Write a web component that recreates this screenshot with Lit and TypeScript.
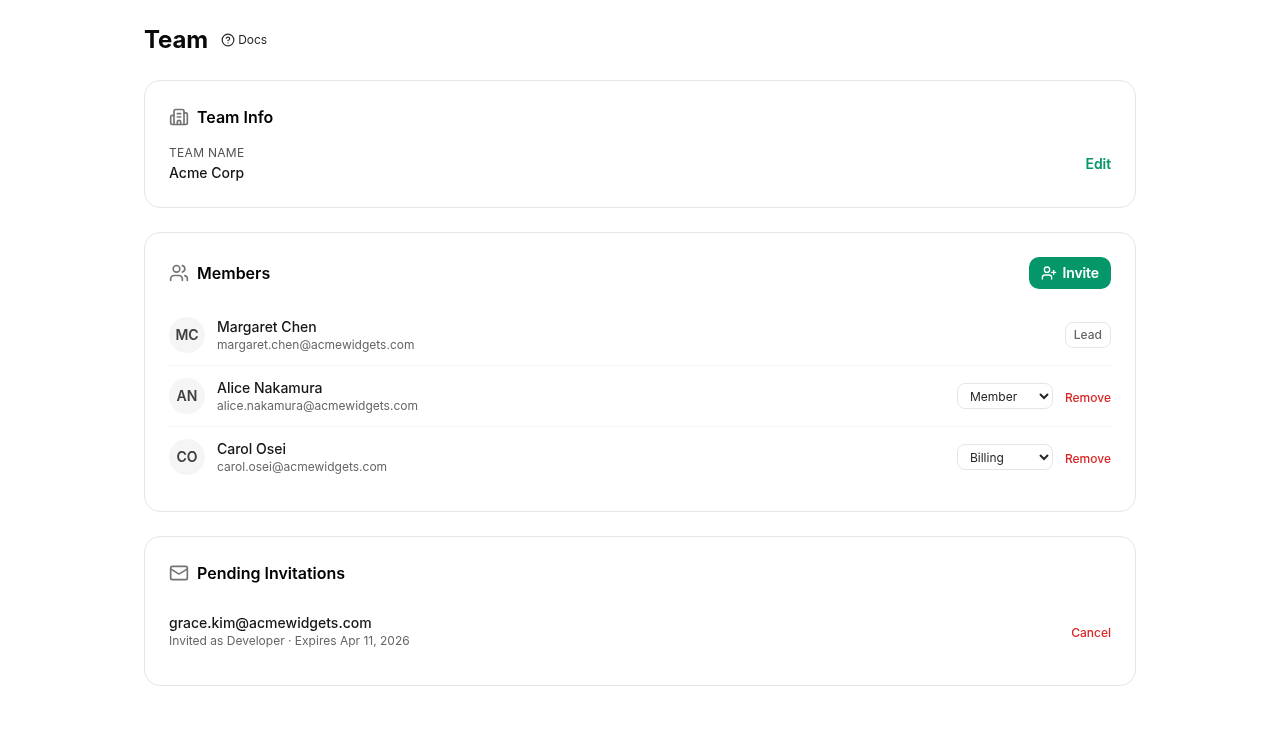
import { LitElement, html, css, svg } from "lit";
import { customElement } from "lit/decorators.js";

const icon = (cls: string, body: unknown) => html`<svg class=${cls} viewBox="0 0 24 24" fill="none" stroke="currentColor" stroke-width="2" stroke-linecap="round" stroke-linejoin="round">${body}</svg>`;

const help = svg`<circle cx="12" cy="12" r="10"/><path d="M9.09 9a3 3 0 0 1 5.83 1c0 2-3 3-3 3"/><path d="M12 17h.01"/>`;
const building = svg`<path d="M10 12h4"/><path d="M10 8h4"/><path d="M14 21v-3a2 2 0 0 0-4 0v3"/><path d="M6 10H4a2 2 0 0 0-2 2v7a2 2 0 0 0 2 2h16a2 2 0 0 0 2-2V9a2 2 0 0 0-2-2h-2"/><path d="M6 21V5a2 2 0 0 1 2-2h8a2 2 0 0 1 2 2v16"/>`;
const users = svg`<path d="M16 21v-2a4 4 0 0 0-4-4H6a4 4 0 0 0-4 4v2"/><path d="M16 3.128a4 4 0 0 1 0 7.744"/><path d="M22 21v-2a4 4 0 0 0-3-3.87"/><circle cx="9" cy="7" r="4"/>`;
const userPlus = svg`<path d="M16 21v-2a4 4 0 0 0-4-4H6a4 4 0 0 0-4 4v2"/><circle cx="9" cy="7" r="4"/><line x1="19" x2="19" y1="8" y2="14"/><line x1="22" x2="16" y1="11" y2="11"/>`;
const mail = svg`<path d="m22 7-8.991 5.727a2 2 0 0 1-2.009 0L2 7"/><rect x="2" y="4" width="20" height="16" rx="2"/>`;

interface Member { initials: string; name: string; email: string; role?: string; }

const members: Member[] = [
  { initials: "MC", name: "Margaret Chen", email: "margaret.chen@acmewidgets.com" },
  { initials: "AN", name: "Alice Nakamura", email: "alice.nakamura@acmewidgets.com", role: "Member" },
  { initials: "CO", name: "Carol Osei", email: "carol.osei@acmewidgets.com", role: "Billing" },
];

const roles = ["Member", "Billing", "Developer", "Admin"];

@customElement("app-root")
export class AppRoot extends LitElement {
  static styles = css`
    :host {
      display: block;
      font-family: Inter, "Liberation Sans", sans-serif;
      color: #0a0a0a;
      background: #fff;
      -webkit-font-smoothing: antialiased;
    }
    .page {
      max-width: 992px;
      margin: 0 auto;
      padding: 24px 0 48px;
      will-change: opacity;
    }
    .top {
      display: flex;
      align-items: center;
      gap: 12px;
      margin-bottom: 24px;
    }
    h1 {
      margin: 0;
      font-size: 24px;
      line-height: 32px;
      font-weight: 700;
      letter-spacing: -0.1px;
      color: #0a0a0a;
    }
    .docs {
      display: inline-flex;
      align-items: center;
      gap: 3px;
      font-size: 12px;
      line-height: 16px;
      color: #262626;
      text-decoration: none;
      padding-left: 1px;
    }
    .i14 { width: 14px; height: 14px; flex: none; }
    .i16 { width: 16px; height: 16px; flex: none; }
    .i20 { width: 20px; height: 20px; flex: none; color: #737373; }
    .cards { display: flex; flex-direction: column; gap: 24px; }
    .card {
      border: 1px solid #e5e5e5;
      border-radius: 16px;
      padding: 24px;
    }
    .head {
      display: flex;
      align-items: center;
      justify-content: space-between;
      margin-bottom: 16px;
    }
    .title {
      display: flex;
      align-items: center;
      gap: 8px;
    }
    h2 {
      margin: 0;
      font-size: 16px;
      line-height: 24px;
      font-weight: 600;
      color: #000;
    }
    .between {
      display: flex;
      align-items: center;
      justify-content: space-between;
    }
    .label {
      font-size: 12px;
      line-height: 16px;
      color: #525252;
      text-transform: uppercase;
      letter-spacing: 0.3px;
      margin-bottom: 2px;
    }
    .value {
      font-size: 14px;
      line-height: 20px;
      font-weight: 500;
      color: #171717;
    }
    button {
      font-family: inherit;
      background: none;
      border: none;
      padding: 0;
      cursor: pointer;
    }
    .edit {
      font-size: 14px;
      line-height: 20px;
      font-weight: 600;
      letter-spacing: -0.1px;
      color: #059669;
    }
    .invite {
      display: flex;
      align-items: center;
      gap: 5px;
      height: 32px;
      padding: 0 12px;
      border-radius: 10px;
      background: #059669;
      color: #fff;
      font-size: 14px;
      line-height: 20px;
      font-weight: 600;
      letter-spacing: -0.1px;
    }
    .row {
      display: flex;
      align-items: center;
      gap: 12px;
      padding: 12px 0;
      border-bottom: 1px solid #f5f5f5;
    }
    .row:last-child { border-bottom: none; }
    .avatar {
      width: 36px;
      height: 36px;
      flex: none;
      border-radius: 50%;
      background: #f5f5f5;
      color: #404040;
      display: flex;
      align-items: center;
      justify-content: center;
      font-size: 14px;
      line-height: 20px;
      font-weight: 600;
    }
    .who { flex: 1; min-width: 0; }
    .name {
      font-size: 14px;
      line-height: 20px;
      font-weight: 500;
      color: #171717;
    }
    .sub {
      font-size: 12px;
      line-height: 16px;
      color: #666;
    }
    .badge {
      font-size: 12px;
      line-height: 16px;
      font-weight: 500;
      color: #666;
      border: 1px solid #e5e5e5;
      border-radius: 8px;
      padding: 4px 8px;
    }
    select {
      width: 96px;
      height: 26px;
      box-sizing: border-box;
      font-family: inherit;
      font-size: 12px;
      color: #262626;
      background: #fff;
      border: 1px solid #e5e5e5;
      border-radius: 8px;
      padding: 0 8px;
    }
    .danger {
      font-size: 12px;
      line-height: 16px;
      font-weight: 500;
      color: #dc2626;
      padding-top: 3px;
    }
    .invitation {
      display: flex;
      align-items: center;
      justify-content: space-between;
      padding: 12px 0;
    }
  `;

  render() {
    return html`
      <div class="page">
        <div class="top">
          <h1>Team</h1>
          <a class="docs" href="#">${icon("i14", help)}Docs</a>
        </div>
        <div class="cards">
          <section class="card">
            <div class="head">
              <div class="title">${icon("i20", building)}<h2>Team Info</h2></div>
            </div>
            <div class="between">
              <div>
                <div class="label">Team name</div>
                <div class="value">Acme Corp</div>
              </div>
              <button class="edit">Edit</button>
            </div>
          </section>
          <section class="card">
            <div class="head">
              <div class="title">${icon("i20", users)}<h2>Members</h2></div>
              <button class="invite">${icon("i16", userPlus)}Invite</button>
            </div>
            <div>
              ${members.map(
                (m) => html`
                  <div class="row">
                    <div class="avatar">${m.initials}</div>
                    <div class="who">
                      <div class="name">${m.name}</div>
                      <div class="sub">${m.email}</div>
                    </div>
                    ${m.role
                      ? html`<select>
                            ${roles.map((r) => html`<option ?selected=${r === m.role}>${r}</option>`)}
                          </select>
                          <button class="danger">Remove</button>`
                      : html`<span class="badge">Lead</span>`}
                  </div>
                `
              )}
            </div>
          </section>
          <section class="card">
            <div class="head">
              <div class="title">${icon("i20", mail)}<h2>Pending Invitations</h2></div>
            </div>
            <div class="invitation">
              <div>
                <div class="name">grace.kim@acmewidgets.com</div>
                <div class="sub">Invited as Developer · Expires Apr 11, 2026</div>
              </div>
              <button class="danger">Cancel</button>
            </div>
          </section>
        </div>
      </div>
    `;
  }
}
